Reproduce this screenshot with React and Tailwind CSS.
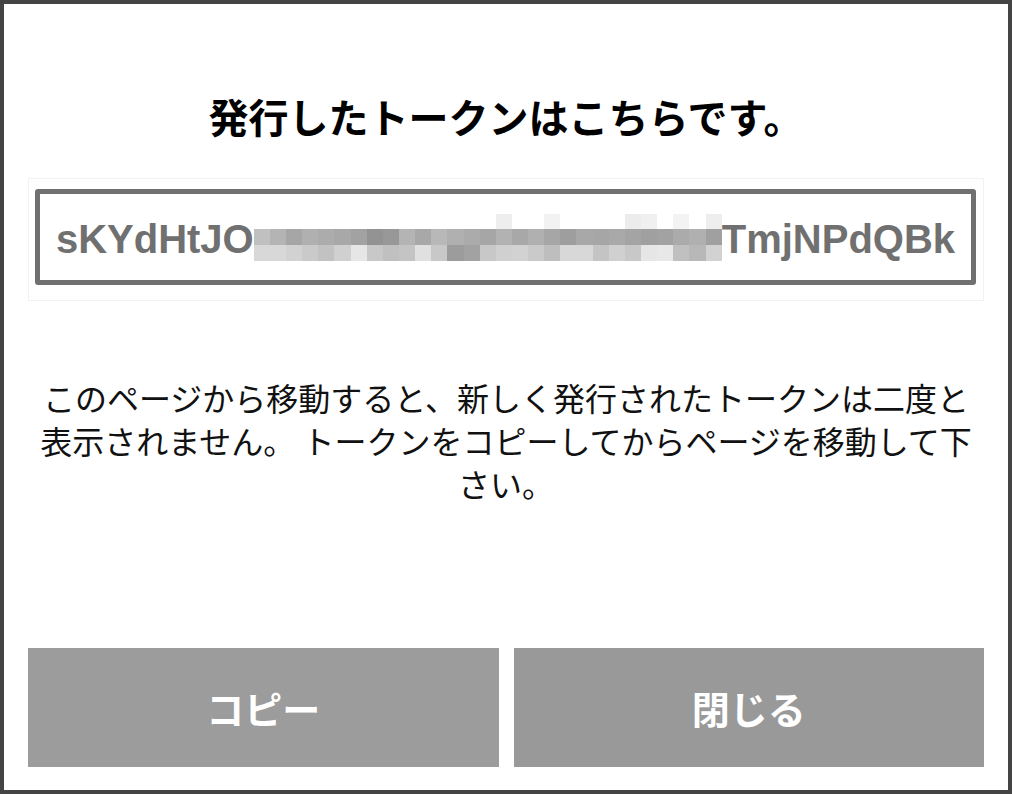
import React from 'react';

const jp = { fontFamily: '"Noto Sans CJK JP", "Noto Sans", sans-serif' };

// mosaic that hides the middle of the token, three rows of blocks
const mosaic = [
  [
    'bg-white', 'bg-white', 'bg-white', 'bg-white', 'bg-white', 'bg-white', 'bg-white', 'bg-white',
    'bg-white', 'bg-white', 'bg-white', 'bg-white', 'bg-white', 'bg-white', 'bg-white', 'bg-[#eeeeee]',
    'bg-white', 'bg-white', 'bg-[#f2f2f2]', 'bg-white', 'bg-white', 'bg-white', 'bg-white', 'bg-[#ececec]',
    'bg-[#f0f0f0]', 'bg-white', 'bg-[#f3f3f3]', 'bg-white', 'bg-[#eeeeee]',
  ],
  [
    'bg-[#c0c0c0]', 'bg-[#b4b4b4]', 'bg-[#a6a6a6]', 'bg-[#b0b0b0]', 'bg-[#acacac]', 'bg-[#a8a8a8]',
    'bg-[#a2a2a2]', 'bg-[#939393]', 'bg-[#989898]', 'bg-[#b4b4b4]', 'bg-[#a8a8a8]', 'bg-[#b8b8b8]',
    'bg-[#b0b0b0]', 'bg-[#ababab]', 'bg-[#a6a6a6]', 'bg-[#b2b2b2]', 'bg-[#a8a8a8]', 'bg-[#b0b0b0]',
    'bg-[#a6a6a6]', 'bg-[#9e9e9e]', 'bg-[#a8a8a8]', 'bg-[#a6a6a6]', 'bg-[#a9a9a9]', 'bg-[#a4a4a4]',
    'bg-[#a0a0a0]', 'bg-[#a2a2a2]', 'bg-[#ababab]', 'bg-[#b0b0b0]', 'bg-[#a0a0a0]',
  ],
  [
    'bg-[#d8d8d8]', 'bg-[#d8d8d8]', 'bg-[#d2d2d2]', 'bg-[#cacaca]', 'bg-[#c2c2c2]', 'bg-[#d0d0d0]',
    'bg-[#e6e6e6]', 'bg-[#c8c8c8]', 'bg-[#c0c0c0]', 'bg-[#c4c4c4]', 'bg-[#e0e0e0]', 'bg-[#c8c8c8]',
    'bg-[#9c9c9c]', 'bg-[#a2a2a2]', 'bg-[#c8c8c8]', 'bg-[#d0d0d0]', 'bg-[#d2d2d2]', 'bg-[#cacaca]',
    'bg-[#bebebe]', 'bg-[#d8d8d8]', 'bg-[#d8d8d8]', 'bg-[#c4c4c4]', 'bg-[#d0d0d0]', 'bg-[#c8c8c8]',
    'bg-[#e6e6e6]', 'bg-[#e8e8e8]', 'bg-[#c0c0c0]', 'bg-[#b8b8b8]', 'bg-[#d2d2d2]',
  ],
];

const App = () => {
  return (
    <div
      className="w-full h-[794px] border-4 border-[#444444] bg-white flex flex-col text-black"
      style={jp}
    >
      {/* Title */}
      <h1 className="pt-[86px] text-center text-[40px] leading-[53px] font-bold">
        発行したトークンはこちらです。
      </h1>

      {/* Token */}
      <div className="mx-6 mt-[35px] border border-[#f2f2f2] pt-[10px] pb-[15px] pl-[6px] pr-[7px]">
        <div className="h-[96px] border-[5px] border-[#707070] rounded-[3px] flex items-center justify-center">
          <div
            className="flex items-center text-[40px] font-bold text-[#707070] leading-none pt-[3px]"
            style={{ fontFamily: '"Liberation Sans", Arial, sans-serif' }}
          >
            <span>sKYdHtJO</span>
            <div className="w-[468px] h-[47px] -mt-[3px] flex flex-col">
              {mosaic.map((row, r) => (
                <div key={r} className="flex-1 grid grid-cols-[repeat(29,1fr)]">
                  {row.map((cls, c) => (
                    <div key={c} className={cls} />
                  ))}
                </div>
              ))}
            </div>
            <span>TmjNPdQBk</span>
          </div>
        </div>
      </div>

      {/* Notice */}
      <p className="mx-6 mt-[75px] text-center text-[32px] leading-[43px] text-[#111111]">
        このページから移動すると、新しく発行されたトークンは二度と表示されません。 トークンをコピーしてからページを移動して下さい。
      </p>

      {/* Buttons */}
      <div className="mt-auto mb-[23px] mx-6 flex gap-[15px]">
        <button className="flex-1 h-[119px] bg-[#9c9c9c] text-white text-[38px] font-bold">
          コピー
        </button>
        <button className="flex-1 h-[119px] bg-[#999999] text-white text-[38px] font-bold">
          閉じる
        </button>
      </div>
    </div>
  );
};

export default App;
